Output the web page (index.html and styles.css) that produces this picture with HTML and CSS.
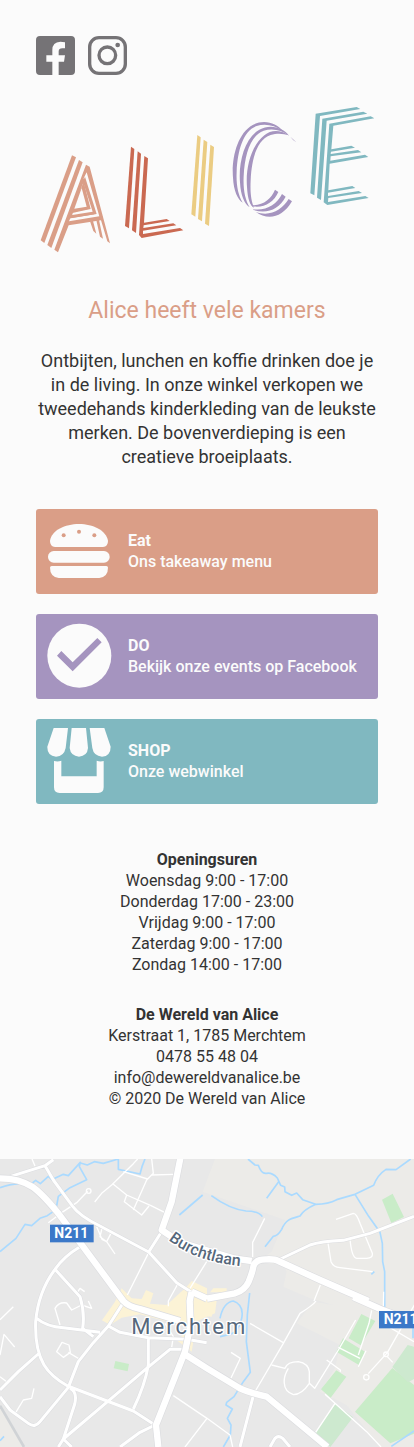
FILE: index.html
```html
<!DOCTYPE html>
<html lang="nl">
<head>
<meta charset="utf-8">
<meta name="viewport" content="width=device-width, initial-scale=1">
<title>De Wereld van Alice</title>
<link rel="stylesheet" href="styles.css">
</head>
<body>
<main class="page">
  <nav class="social" aria-label="Sociale media">
    <a href="#facebook" aria-label="Facebook">
      <svg class="social-icon" viewBox="30 30 117 117"><path d="M42 30H135Q147 30 147 42V135Q147 147 135 147H98V107H114L117 88H98V76Q98 67 109 67H117V49Q110 47 103 47Q79 48 79 72V88H61V107H79V147H42Q30 147 30 135V42Q30 30 42 30Z"/></svg>
    </a>
    <a href="#instagram" aria-label="Instagram">
      <svg class="social-icon" viewBox="186 30 117 117"><rect class="ring" x="191" y="35" width="107" height="107" rx="28"/><circle class="ring" cx="244" cy="88" r="25"/><circle cx="275" cy="57" r="7"/></svg>
    </a>
  </nav>

  <h1 class="logo">
    <svg viewBox="18 0 1026 510" role="img" aria-label="Alice">
      <g class="logo-a">
        <path d="M126 181L138 187L43 444L32 436Z"/>
        <path d="M147 195L158 202L64 459L52 450Z"/>
        <path d="M168 209L179 215L240 445L232 439L213 376L116 391L84 472L73 464Z"/>
        <path class="gap" d="M170 232L208 364L117 379L121 370L193 358L161 250Z"/>
        <path d="M165 245L200 357L121 370L125 360L188 350L158 261Z"/>
        <path class="gap" d="M160 263L188 350L126 360L130 351L174 342L152 283Z"/>
        <path d="M161 260L182 342L126 354L131 345L168 337L151 285Z"/>
        <path class="gap" d="M155 279L170 335L133 341Z"/>
        <path d="M180 379L189 378L199 416L190 408ZM199 376L207 375L219 431L210 425Z"/>
      </g>
      <g class="logo-l">
        <path d="M303 155L313 162L297 400L285 393Z"/>
        <path d="M323 169L333 176L318 414L306 406Z"/>
        <path d="M343 183L354 190L342 383L410 372L419 378L341 391L340 399L430 385L439 391L339 407L339 417L450 399L460 406L335 429L327 420Z"/>
      </g>
      <g class="logo-i">
        <path d="M502 120L512 127L496 365L484 358Z"/>
        <path d="M521 134L532 141L516 379L504 372Z"/>
        <path d="M541 149L552 156L537 393L525 386Z"/>
      </g>
      <g class="logo-c">
        <path d="M758 108C740 83 700 72 668 90C622 115 604 190 609 248C611 288 623 312 638 323C624 300 618 268 620 230C623 165 640 108 680 93C705 85 733 90 758 108Z"/>
        <path d="M777 122C760 97 720 86 688 104C643 129 625 204 630 262C632 302 643 326 659 337C645 314 639 282 641 244C644 179 661 122 701 107C726 99 754 104 777 122Z"/>
        <path d="M776 121C750 103 722 105 703 121C664 151 646 218 651 276C653 312 660 332 672 338C664 318 660 296 662 256C665 187 682 134 722 120C743 113 762 116 776 121ZM781 125L799 142Q788 135 781 125Z"/>
        <path d="M664 331C698 332 724 312 735 284L745 291C731 323 701 340 667 334ZM670 343C709 348 741 328 756 297L767 305C746 343 713 357 670 345ZM677 350C718 367 756 345 776 312L786 319C756 370 712 377 677 350Z"/>
      </g>
      <g class="logo-e">
        <path d="M857 56L980 36L991 42L870 63L853 301L841 295Z"/>
        <path d="M877 71L1000 50L1012 56L890 77L873 315L861 308Z"/>
        <path d="M898 86L1022 64L1033 70L910 92L904 163L964 152L975 158L903 170L902 177L984 165L994 172L902 184L901 197L1005 179L1015 186L899 206L895 286L967 273L976 279L894 293V303L986 288L996 294L895 309L894 321L1006 303L1016 309L892 330L881 322Z"/>
      </g>
    </svg>
  </h1>

  <section class="intro">
    <h2>Alice heeft vele kamers</h2>
    <p>Ontbijten, lunchen en koffie drinken doe je in de living. In onze winkel verkopen we tweedehands kinderkleding van de leukste merken. De bovenverdieping is een creatieve broeiplaats.</p>
  </section>

  <nav class="cards" aria-label="Alice">
    <a class="card card-eat" href="#eat">
      <svg class="card-icon" viewBox="51 57 195 195"><path d="M75 141Q60 139 60 122C65 91 105 72 147 72S228 91 234 122Q234 139 219 141Z"/><rect x="54" y="153" width="185" height="35" rx="17"/><path d="M65 198H229Q234 198 234 203Q234 230 208 234H86Q60 230 60 203Q60 198 65 198Z"/><g class="cutout"><circle cx="101" cy="106" r="6"/><circle cx="147" cy="95" r="6"/><circle cx="193" cy="106" r="6"/></g></svg>
      <span class="card-text"><strong>Eat</strong><span>Ons takeaway menu</span></span>
    </a>
    <a class="card card-do" href="#do">
      <svg class="card-icon" viewBox="51 57 195 195"><circle cx="148" cy="152" r="96"/><path class="cutout" d="M81 152L94 138L128 172L202 99L215 112L128 199Z"/></svg>
      <span class="card-text"><strong>DO</strong><span>Bekijk onze events op Facebook</span></span>
    </a>
    <a class="card card-shop" href="#shop">
      <svg class="card-icon" viewBox="51 57 195 195"><path d="M71 54H114L107 114Q102 139 78 140Q51 138 52 110ZM125 54H168L174 114Q172 138 147 140Q122 138 119 114ZM179 54H223L242 110Q242 138 216 140Q191 138 187 114ZM72 153Q84 156 94 152V199H200V152Q210 156 221 153V232Q221 249 204 249H89Q72 249 72 232Z"/></svg>
      <span class="card-text"><strong>SHOP</strong><span>Onze webwinkel</span></span>
    </a>
  </nav>

  <section class="details">
    <h3>Openingsuren</h3>
    <p>Woensdag 9:00 - 17:00</p>
    <p>Donderdag 17:00 - 23:00</p>
    <p>Vrijdag 9:00 - 17:00</p>
    <p>Zaterdag 9:00 - 17:00</p>
    <p>Zondag 14:00 - 17:00</p>
  </section>

  <footer class="details">
    <h3>De Wereld van Alice</h3>
    <p>Kerstraat 1, 1785 Merchtem</p>
    <p>0478 55 48 04</p>
    <p><a href="mailto:info@dewereldvanalice.be">info@dewereldvanalice.be</a></p>
    <p>© 2020 De Wereld van Alice</p>
  </footer>
</main>

<svg class="map" viewBox="0 12 1242 864" preserveAspectRatio="xMidYMid slice" role="img" aria-label="Kaart van Merchtem">
  <defs>
    <g id="street-lines">
      <path d="M30 65L135 32L160 14M135 32L160 75L218 154Q240 184 300 213L446 291L530 383L575 412M446 291L488 225M240 275Q190 305 165 343Q115 410 107 500C103 620 145 660 203 693L400 768L465 810M165 343L240 425Q255 475 248 520L280 545M110 490Q140 515 190 518L300 532M370 443L325 513L280 563L235 620L205 697L120 800Q105 820 85 805L30 765L0 725M0 705L55 650L118 594M325 513L360 532L445 548L560 553L620 563M445 548V630Q435 690 400 762M545 583L510 583L440 640L320 742L190 852L215 876M210 700Q233 710 224 748L190 852L175 876M465 810L420 832L360 876"/>
      <path d="M835 315L930 270Q960 260 1030 256L1110 235L1242 184M760 722L720 876M810 876L825 850Q835 840 848 850L870 876"/>
    </g>
    <g id="main-lines">
      <path d="M0 70C90 70 120 110 175 175L242 265L370 438Q385 455 420 462L540 498M543 0L515 140L485 225L540 262L700 310L755 318M621 431L705 415Q735 405 746 380Q758 350 760 335Q765 312 800 313Q825 312 835 318L960 375L1105 438M575 410L621 431M575 410L569 438L572 510L555 590L468 810L475 876M558 600L621 640L720 700Q745 712 800 725L982 876M1060 426L1150 466L1242 500"/>
    </g>
  </defs>

  <rect class="urban" y="12" width="1242" height="864"/>
  <path class="rural" d="M645 12L608 110L855 195L815 290L770 320L850 330L860 350L850 395L930 430L1000 450L940 440L890 505L1020 570L1005 640L960 710L1040 750L1140 876H1242V12ZM0 760L72 876H0Z"/>
  <g class="park">
    <path d="M1146 134L1178 116L1212 186L1174 204Z"/>
    <path d="M1084 477L1126 498L1082 571L1046 550ZM1029 550L1095 590L1078 631L1009 590ZM1009 646L1039 665L992 728L963 703Z"/>
    <path d="M1177 639L1242 690V836L1171 865L1065 770Z"/>
    <path class="park-pale" d="M1223 570L1242 575V672L1224 682L1177 636ZM1006 747L1059 787L991 876L944 836Z"/>
    <path d="M346 618L387 627L383 649L341 640Z"/>
  </g>
  <path class="built" d="M365 400L395 430L425 432L438 405L460 415L450 446L500 450L560 395L575 378L621 400V438H650L645 475L610 490L560 515L420 478L365 488L330 510L306 496L345 440ZM533 558L558 528L580 560L575 590ZM640 400H680V412H630ZM600 440L645 455L635 485L585 480Z"/>

  <g class="water">
    <path d="M0 98Q45 80 90 90L107 76L121 86L145 64L155 74L190 58L205 62L241 22L238 35L260 74L210 98L175 124L168 164L142 182L120 190L95 212L75 208L48 250L0 290"/>
    <path d="M241 24L262 30L283 20L310 25L355 12L355 43L420 57L426 35L435 12"/>
    <path d="M538 180L608 120M634 122Q690 163 738 168Q776 168 787 185M800 130L836 80"/>
    <path d="M744 12L765 30L775 31Q784 58 800 55T832 69L842 91L854 96L855 110L875 121L890 114L908 134L947 148Q985 147 1010 134L1062 119L1121 91Q1132 60 1158 43L1188 44L1232 12"/>
    <path d="M947 148Q910 165 900 183C875 190 858 192 845 223Q833 243 820 244L795 275M1065 118L1106 184L1140 232L1147 265L1148 320L1154 350V474M1114 358L1123 350"/>
    <path d="M749 414L742 480L739 560L751 652L730 680L702 725L680 742L678 750L697 762L682 790L693 810L691 840L670 876M660 490Q670 442 700 438Q733 450 725 490T690 538L660 545"/>
    <path d="M1174 874L1242 828M1239 515V550M0 857L12 844"/>
  </g>
  <path class="rail" d="M0 752L72 876"/>

  <g class="lane">
    <path d="M96 12L105 33M145 203L185 173L230 143L263 109M284 141L305 115L335 90L400 26L413 12M340 88L380 120L453 152L495 173M380 120L373 140L425 180L447 153M400 165L440 75L460 55L455 12M370 50L443 72M455 60L520 58M290 215L306 253L320 260L345 297M306 220L333 235L320 260L300 245Z"/>
    <path d="M446 293L382 420M535 384L505 438V454M620 320L570 400M180 510L165 460Q177 440 200 444L215 465L245 450L275 460L265 438M0 494L40 455M0 600L12 538L44 576M170 590L186 562L207 570L211 592L190 607ZM205 592L238 612M47 773L70 735L95 730L102 700M230 415L240 400L254 410M520 722L621 790L555 876M495 505L520 545L515 577M0 665L20 680"/>
    <path d="M794 190L758 262V306M1008 193L1060 175Q1070 175 1080 205L1117 295Q1119 310 1100 310H1070Q1055 308 1050 252M984 264L993 320Q1000 336 1020 338L1118 350M961 390L942 438M948 438Q940 450 900 475L850 565L768 705M750 505L850 563M815 630L855 640Q862 620 895 620Q925 625 928 650V685Q905 719 880 719Q854 710 853 685Q850 665 865 640M928 685L944 700L1015 585L1067 495M1015 577L1080 610M1115 466L1107 505L1075 600M1098 587L1075 635M980 615L1021 645V650M1250 438L1162 593L1105 656M1162 605L1178 622M693 669L721 610L693 592M975 718L1100 830L1143 876M1005 745L945 835M621 790L690 840L698 876M1140 500L1242 560M1151 410L1150 460"/>
    <circle cx="266" cy="108" r="7"/><circle cx="1158" cy="598" r="7"/><circle cx="1099" cy="667" r="8"/>
  </g>

  <use class="street edge" href="#street-lines"/>
  <use class="street" href="#street-lines"/>
  <use class="main edge" href="#main-lines"/>
  <use class="main" href="#main-lines"/>

  <g class="route">
    <rect x="150" y="209" width="131" height="53"/>
    <text x="163" y="250">N211</text>
    <rect x="1137" y="468" width="131" height="52"/>
    <text x="1151" y="508">N211</text>
  </g>
  <path id="burchtlaan" class="label-path" d="M505 255Q600 330 760 335"/>
  <text class="street-label"><textPath href="#burchtlaan">Burchtlaan</textPath></text>
  <text class="town-label" x="394" y="536">Merchtem</text>
</svg>
</body>
</html>
```
FILE: styles.css
```css
* { box-sizing: border-box; }

body {
  margin: 0;
  background: #fbfbfb;
  color: #333;
  font-family: Roboto, "Liberation Sans", sans-serif;
  font-size: 16px;
  line-height: 21px;
}

h1, h2, h3, p { margin: 0; }
a { color: inherit; text-decoration: none; }
svg { display: block; }

.page { padding: 36px 36px 50px; }

.social { display: flex; gap: 13px; }
.social-icon { width: 39px; height: 39px; fill: #757376; }
.ring { fill: none; stroke: #757376; stroke-width: 10; }

.logo { margin-top: 20px; }
.logo svg { width: 100%; height: auto; }
.logo-a { fill: #da9e87; }
.logo-l { fill: #ca6951; }
.logo-i { fill: #ebcc82; }
.logo-c { fill: #a594bf; }
.logo-e { fill: #80b8c0; }
.gap { fill: #fbfbfb; }

.intro { margin-top: 31px; text-align: center; }
.intro h2 {
  margin-bottom: 23px;
  color: #da9e87;
  font-size: 23px;
  font-weight: 400;
  line-height: 30px;
}
.intro p { font-size: 18px; line-height: 24px; }

.cards {
  display: flex;
  flex-direction: column;
  gap: 20px;
  margin: 40px 0 45px;
}
.card {
  display: flex;
  align-items: center;
  gap: 16px;
  padding: 10px 11px;
  border-radius: 3px;
  color: #fbfbfb;
  font-weight: 500;
}
.card-eat { background: #da9e87; }
.card-do { background: #a594bf; }
.card-shop { background: #80b8c0; }
.card-icon { flex: none; width: 65px; height: 65px; fill: #fbfbfb; overflow: visible; }
.card-eat .cutout { fill: #da9e87; }
.card-do .cutout { fill: #a594bf; }
.card-text { display: flex; flex-direction: column; padding-bottom: 2px; }
.card-text strong, .details h3 { font-weight: 700; }

.details { text-align: center; }
.details + .details { margin-top: 29px; }
.details h3 { font-size: 16px; }

.map { width: 100%; height: 288px; }
.urban { fill: #e8e8e8; }
.rural { fill: #ecebe8; }
.park { fill: #c9ecc8; }
.park-pale { fill: #cde9cf; }
.built { fill: #fcf3d6; }
.water, .lane, .street, .main, .rail {
  fill: none;
  stroke-linejoin: round;
}
.water { stroke: #aadaff; stroke-width: 5; }
.rail { stroke: #d0d3d6; stroke-width: 8; }
.lane { stroke: #fff; stroke-width: 4; }
.street { stroke: #fff; stroke-width: 9; }
.street.edge { stroke: #dcdde0; stroke-width: 12; }
.main { stroke: #fff; stroke-width: 19; }
.main.edge { stroke: #dcdde0; stroke-width: 23; }
.route rect { fill: #3b78c8; }
.route text { fill: #fff; font-size: 42px; font-weight: 700; }
.label-path { fill: none; }
.street-label, .town-label {
  fill: #56687c;
  stroke: #fff;
  stroke-width: 8;
  stroke-linejoin: round;
  paint-order: stroke;
}
.street-label { font-size: 48px; font-weight: 500; }
.town-label { font-size: 66px; letter-spacing: 6px; }
```
